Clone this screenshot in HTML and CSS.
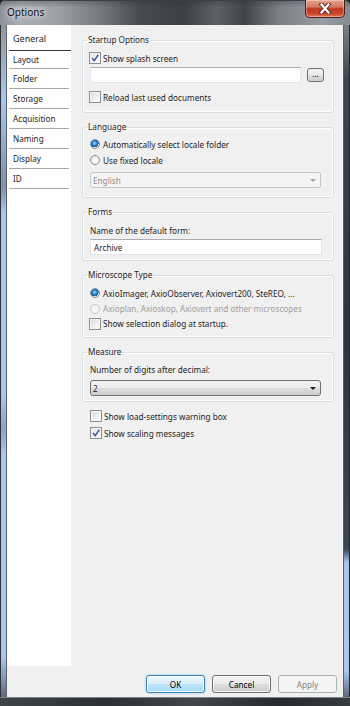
FILE: index.html
```html
<!DOCTYPE html>
<html lang="en">
<head>
    <meta charset="UTF-8">
    <meta name="viewport" content="width=device-width, initial-scale=1.0">
    <title>Options</title>
    <link rel="stylesheet" href="styles.css">
</head>
<body>
    <div class="window">
        <div class="titlebar">
            <span class="title">Options</span>
            <button class="close-btn" title="Close">
                <svg width="14" height="11" viewBox="0 0 14 11">
                    <path d="M3.5 1.5 L10.5 9.5 M10.5 1.5 L3.5 9.5" stroke="#5a2319" stroke-width="4" stroke-linecap="square" fill="none"/>
                    <path d="M3.5 1.5 L10.5 9.5 M10.5 1.5 L3.5 9.5" stroke="#fff" stroke-width="2.2" stroke-linecap="square" fill="none"/>
                </svg>
            </button>
        </div>
        <div class="frame-body">
            <div class="frame-left"></div>
            <div class="client">
                <div class="content">
                    <ul class="nav">
                        <li class="active">General</li>
                        <li class="short">Layout</li>
                        <li>Folder</li>
                        <li>Storage</li>
                        <li>Acquisition</li>
                        <li>Naming</li>
                        <li>Display</li>
                        <li>ID</li>
                    </ul>
                    <div class="page">
                        <fieldset class="group startup">
                            <legend>Startup Options</legend>
                            <label class="check"><span class="box checked"><svg width="10" height="10" viewBox="0 0 10 10"><path d="M2 5 L4.2 7.6 L8.3 1.8" stroke="#4a5d9a" stroke-width="1.6" fill="none"/></svg></span>Show splash screen</label>
                            <div class="path-row">
                                <input type="text" class="textbox" value="">
                                <button class="browse">...</button>
                            </div>
                            <label class="check gap"><span class="box"></span>Reload last used documents</label>
                        </fieldset>

                        <fieldset class="group language">
                            <legend>Language</legend>
                            <label class="radio"><span class="dot on"></span>Automatically select locale folder</label>
                            <label class="radio"><span class="dot"></span>Use fixed locale</label>
                            <div class="combo disabled"><span>English</span><span class="arrow"></span></div>
                        </fieldset>

                        <fieldset class="group forms">
                            <legend>Forms</legend>
                            <div class="caption">Name of the default form:</div>
                            <input type="text" class="textbox wide" value="Archive">
                        </fieldset>

                        <fieldset class="group microscope">
                            <legend>Microscope Type</legend>
                            <label class="radio"><span class="dot on"></span>AxioImager, AxioObserver, Axiovert200, SteREO, ...</label>
                            <label class="radio small off"><span class="dot"></span>Axioplan, Axioskop, Axiovert and other microscopes</label>
                            <label class="check small"><span class="box"></span>Show selection dialog at startup.</label>
                        </fieldset>

                        <fieldset class="group measure">
                            <legend>Measure</legend>
                            <div class="caption">Number of digits after decimal:</div>
                            <div class="combo"><span>2</span><span class="arrow"></span></div>
                        </fieldset>

                        <div class="extra">
                            <label class="check"><span class="box"></span>Show load-settings warning box</label>
                            <label class="check"><span class="box checked"><svg width="10" height="10" viewBox="0 0 10 10"><path d="M2 5 L4.2 7.6 L8.3 1.8" stroke="#4a5d9a" stroke-width="1.6" fill="none"/></svg></span>Show scaling messages</label>
                        </div>
                    </div>
                </div>
                <div class="buttons">
                    <button class="btn default">OK</button>
                    <button class="btn">Cancel</button>
                    <button class="btn" disabled>Apply</button>
                </div>
            </div>
            <div class="frame-right"></div>
        </div>
        <div class="frame-bottom"></div>
    </div>
</body>
</html>
```

FILE: styles.css
```css
body {
    margin: 0;
    font-family: "Noto Sans", "Open Sans", sans-serif;
    font-size: 8.2px;
    color: #1e1e1e;
    background: #20252a;
}
.window {
    width: 350px;
    height: 706px;
    display: flex;
    flex-direction: column;
    border-radius: 6px 6px 0 0;
    overflow: hidden;
    background: #2a2e33;
}

/* title bar */
.titlebar {
    height: 25px;
    flex: none;
    display: flex;
    align-items: flex-start;
    background:
        linear-gradient(180deg, rgba(40, 45, 50, 0.35), rgba(0, 0, 0, 0) 30%),
        linear-gradient(90deg, #8c9298 0%, #a9aeb3 6%, #9ca2a8 16%, #767c82 28%, #454b51 40%, #3a4046 52%, #5b6167 62%, #3f454b 70%, #7b8187 80%, #969ca2 92%, #858b91 100%);
    box-shadow: inset 0 1px 0 #3b4045;
}
.title {
    padding: 5px 0 0 7px;
    font-size: 10px;
    line-height: 14px;
    color: #111;
    text-shadow: 0 0 5px #fff, 0 0 9px rgba(255, 255, 255, 0.8);
}
.close-btn {
    margin: 0 5px 0 auto;
    width: 40px;
    height: 18px;
    padding: 0;
    border: 1px solid #4b1d15;
    border-top: none;
    border-radius: 0 0 5px 5px;
    background: linear-gradient(180deg, #e6a08e 0%, #d37a63 40%, #c0391f 52%, #c9472c 80%, #de7a5e 100%);
    box-shadow: inset 0 0 0 1px rgba(255, 255, 255, 0.35);
    display: flex;
    align-items: center;
    justify-content: center;
}

/* frame */
.frame-body {
    height: 672px;
    display: flex;
}
.frame-left {
    width: 7px;
    background: linear-gradient(180deg, #8f969d 0%, #9fb1c6 6%, #a9c7ed 11%, #7d91ab 24%, #a9c7ed 28%, #a9c7ed 55%, #8ba3c2 60%, #a9c7ed 64%, #a9c7ed 94%, #5f6b79 100%);
    box-shadow: inset 1px 0 0 #2f3439, inset -1px 0 0 #59606a;
}
.frame-right {
    width: 7px;
    background: linear-gradient(180deg, #7a8189 0%, #3c4652 8%, #2b3440 45%, #3a4756 78%, #a7c5eb 80%, #a9c7ed 96%, #5f6b79 100%);
    box-shadow: inset -1px 0 0 #23272c, inset 1px 0 0 #59606a;
}
.frame-bottom {
    height: 9px;
    flex: none;
    background: linear-gradient(90deg, #3d444b 0%, #2a3036 30%, #40464c 55%, #262b31 80%, #353b42 100%);
    box-shadow: inset 0 1px 0 #7d838a;
}

.client {
    flex: 1;
    background: #f0f0f0;
    display: flex;
    flex-direction: column;
}
.content {
    height: 641px;
    display: flex;
}

/* left list */
.nav {
    width: 64px;
    margin: 0;
    padding: 0;
    list-style: none;
    background: #fff;
}
.nav li {
    height: 19px;
    line-height: 19px;
    margin: 0 2px;
    padding-left: 4px;
    border-bottom: 1px solid #a7a7a7;
}
.nav li.active {
    height: 25px;
    line-height: 28px;
    margin-right: 0;
    border-bottom-color: #3a3a3a;
    font-size: 9px;
}
.nav li.short {
    height: 17px;
    line-height: 17px;
}

/* page */
.page {
    flex: 1;
    padding: 9px 9px 0 11px;
}
.group {
    margin: 0 0 8px;
    padding: 4px 11px 7px 6px;
    border: 1px solid #d5dfe5;
    border-radius: 3px;
    box-shadow: inset 0 0 0 1px #fff;
    min-width: 0;
}
.group legend {
    padding: 0 1px;
    margin-left: -2px;
    line-height: 12px;
}
.language { padding-top: 3px; padding-bottom: 9px; }
.forms { margin-top: 2px; padding-bottom: 5px; }
.microscope { margin-top: 1px; padding-bottom: 6px; }
.measure { padding-top: 3px; padding-bottom: 5px; margin-bottom: 0; }

.check, .radio, .caption {
    display: flex;
    align-items: center;
    height: 16px;
}
.check.small, .radio.small { height: 15px; }
.check.gap { margin-top: 6px; }
.caption { padding-left: 1px; }

.box {
    width: 12px;
    height: 12px;
    box-sizing: border-box;
    margin-right: 2px;
    border: 1px solid #8e8f8f;
    background: linear-gradient(135deg, #d9d9d9, #f5f5f5 70%, #fdfdfd);
    box-shadow: inset 0 0 0 1px #f4f4f4;
    display: flex;
    align-items: center;
    justify-content: center;
}
.box.checked {
    background: linear-gradient(135deg, #dfe4ef, #f6f8fb 70%);
}
.dot {
    width: 10px;
    height: 10px;
    box-sizing: border-box;
    margin: 0 3px 0 1px;
    border: 1px solid #8e8f8f;
    border-radius: 50%;
    background: radial-gradient(circle at 60% 65%, #fdfdfd 20%, #d6d6d6 100%);
}
.dot.on {
    background: radial-gradient(circle at 45% 40%, #9fd3fb 0%, #2b83d6 35%, #135c9e 60%, #e8e8e8 62%, #f7f7f7 100%);
}
.off { color: #a0a0a0; }
.off .dot { border-color: #c8c8c8; background: #f4f4f4; }

.textbox {
    display: block;
    height: 16px;
    box-sizing: border-box;
    margin: 0 0 0 1px;
    padding: 0 3px;
    border: 1px solid #e2e6ec;
    border-top-color: #abadb3;
    background: #fff;
    font: inherit;
    color: #1e1e1e;
    outline: none;
}
.textbox.wide { width: 232px; margin-top: 1px; }
.path-row {
    display: flex;
    align-items: center;
    gap: 6px;
    margin: 1px -2px 0 0;
}
.path-row .textbox { flex: 1; }
.browse {
    width: 17px;
    height: 14px;
    padding: 0 0 3px;
    border: 1px solid #707070;
    border-radius: 3px;
    background: linear-gradient(180deg, #f2f2f2 0%, #ebebeb 50%, #dddddd 51%, #cfcfcf 100%);
    font: inherit;
    font-size: 8px;
    line-height: 8px;
}

.combo {
    height: 16px;
    box-sizing: border-box;
    margin: 4px 1px 0;
    padding: 0 4px 0 2px;
    display: flex;
    align-items: center;
    justify-content: space-between;
    border: 1px solid #707070;
    border-radius: 3px;
    background: linear-gradient(180deg, #f2f2f2 0%, #ebebeb 50%, #dddddd 51%, #cfcfcf 100%);
}
.combo.disabled {
    border-color: #c5c5c5;
    border-radius: 2px;
    background: #f4f4f4;
    color: #8d8d8d;
}
.measure .combo { margin-top: 3px; }
.arrow {
    width: 0;
    height: 0;
    border-left: 3px solid transparent;
    border-right: 3px solid transparent;
    border-top: 3px solid #1e1e1e;
}
.disabled .arrow { border-top-color: #a8a8a8; }

.extra {
    padding: 6px 0 0 8px;
    display: flex;
    flex-direction: column;
    gap: 1px;
}

/* bottom buttons */
.buttons {
    flex: 1;
    display: flex;
    justify-content: flex-end;
    gap: 7px;
    padding: 9px 6px 0 0;
}
.btn {
    width: 59px;
    height: 18px;
    padding: 0;
    border: 1px solid #707070;
    border-radius: 3px;
    background: linear-gradient(180deg, #f2f2f2 0%, #ebebeb 50%, #dddddd 51%, #cfcfcf 100%);
    box-shadow: inset 0 0 0 1px rgba(255, 255, 255, 0.7);
    font: inherit;
    color: #000;
}
.btn.default {
    border-color: #3c7fb1;
    background: linear-gradient(180deg, #eaf6fd 0%, #d9f0fc 50%, #bee6fd 51%, #a7d9f5 100%);
    box-shadow: inset 0 0 0 1px #fff, 0 0 2px #6fc1ee;
}
.btn:disabled {
    border-color: #adb2b5;
    background: #f4f4f4;
    box-shadow: none;
    color: #838383;
}
```
